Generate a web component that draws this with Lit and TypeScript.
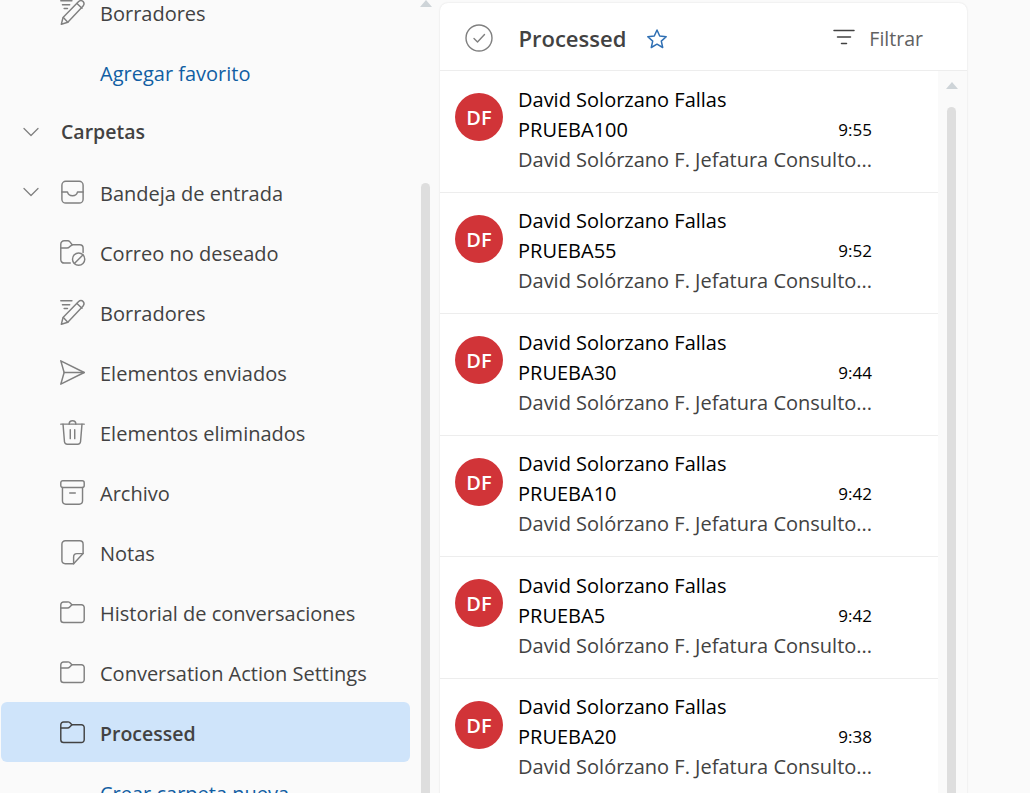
import { LitElement, html, css, svg } from "lit";
import { customElement } from "lit/decorators.js";

const ic = (inner: unknown) => html`<svg class="ic" width="29" height="29" viewBox="0 0 26 26" fill="none" stroke="currentColor" stroke-width="1.300" stroke-linecap="round" stroke-linejoin="round">${inner}</svg>`;

const icons: Record<string, unknown> = {
  draft: ic(svg`<path d="M2.500 2.500h10M4 6h6.500M5.500 9.500h3"/><path d="M3 23.500l1.500-6L18.500 3.200c1.200-1.200 3-1.200 4 0s1 2.800 0 3.900L8.800 21.800z"/><path d="M17 5l4.500 4.200M4.800 17.500l4 4.300"/>`),
  inbox: ic(svg`<rect x="3.500" y="3" width="19" height="19.500" rx="3.500"/><path d="M3.500 12.500h5c.5 2.400 2.200 3.500 4.500 3.500s4-1.100 4.500-3.500h5"/>`),
  junk: ic(svg`<path d="M11 22.500H5.500A3 3 0 0 1 2.500 19.500V5.500a3 3 0 0 1 3-3h3.300c.8 0 1.400.4 1.900 1l2 2.500h6.800a3 3 0 0 1 3 3v4"/><path d="M2.500 9h5.500c1 0 1.800-.5 2.500-1.200L13 6"/><circle cx="18.500" cy="19" r="5.500"/><path d="M14.700 22.800l7.600-7.600"/>`),
  send: ic(svg`<path d="M2.500 2.500l21 10.500-21 10.500 3-10.500z"/><path d="M5.500 13h18"/>`),
  trash: ic(svg`<path d="M2.500 5.500h21"/><path d="M10 5.500c0-1.700 1.300-3 3-3s3 1.300 3 3"/><path d="M4.500 5.500l1.300 15.800a2.500 2.500 0 0 0 2.500 2.200h9.400a2.500 2.500 0 0 0 2.500-2.200l1.300-15.800"/><path d="M11 10.500v8M15 10.500v8"/>`),
  archive: ic(svg`<rect x="2.500" y="2.500" width="21" height="6" rx="1.800"/><path d="M4 8.500v12a3 3 0 0 0 3 3h12a3 3 0 0 0 3-3v-12"/><path d="M10.500 13.500h5"/>`),
  note: ic(svg`<path d="M14 23H6.500a3 3 0 0 1-3-3V5.500a3 3 0 0 1 3-3h13a3 3 0 0 1 3 3V14z"/><path d="M14 23v-6a3 3 0 0 1 3-3h5.500"/>`),
  folder: ic(svg`<path d="M2.500 7V19.500a2.500 2.500 0 0 0 2.500 2.500h16a2.500 2.500 0 0 0 2.500-2.500V8.500A2.500 2.500 0 0 0 21 6h-8.500l-2-2A2.500 2.500 0 0 0 8.700 3.500H5a2.500 2.500 0 0 0-2.500 2.500z"/><path d="M2.500 9H8.500c.8 0 1.500-.3 2-.9L12.500 6"/>`),
};

const chevron = html`<svg class="chev" width="16" height="10" viewBox="0 0 16 10" fill="none" stroke="currentColor" stroke-width="1.300" stroke-linecap="round" stroke-linejoin="round"><path d="M1 1.500l7 7 7-7"/></svg>`;

const tree: [string, string][] = [
  ["junk", "Correo no deseado"],
  ["draft", "Borradores"],
  ["send", "Elementos enviados"],
  ["trash", "Elementos eliminados"],
  ["archive", "Archivo"],
  ["note", "Notas"],
  ["folder", "Historial de conversaciones"],
  ["folder", "Conversation Action Settings"],
];
const mails: [string, string][] = [
  ["PRUEBA100", "9:55"],
  ["PRUEBA55", "9:52"],
  ["PRUEBA30", "9:44"],
  ["PRUEBA10", "9:42"],
  ["PRUEBA5", "9:42"],
  ["PRUEBA20", "9:38"],
];

@customElement("app-root")
export class AppRoot extends LitElement {
  static styles = css`
    :host {
      display: flex;
      width: 1030px;
      height: 793px;
      overflow: hidden;
      background: #fafafa;
      font-family: "Open Sans", "Noto Sans", sans-serif;
      font-size: 20px;
      color: #424242;
    }
    .side { width: 409px; margin-left: 1px; flex: none; height: 793px; overflow: hidden; }
    .nav { margin-top: -18px; display: flex; flex-direction: column; }
    .row { height: 60px; flex: none; display: flex; align-items: center; padding-left: 56.500px; gap: 13.500px; border-radius: 6px; white-space: nowrap; }
    .row span { padding-top: 2px; }
    .row.plain { padding-left: 99px; }
    .row.parent { padding-left: 22px; }
    .row.parent .chev { margin-right: 5px; color: #808080; }
    .row.head { font-weight: 600; font-size: 19.500px; padding-left: 22px; }
    .row.head span { padding-top: 0; padding-bottom: 2px; }
    .row.head .chev { margin-right: 8.500px; color: #808080; }
    .link { color: #115ea3; }
    .sel { background: #cfe4fa; font-weight: 600; font-size: 19.500px; }
    .ic { flex: none; color: #808080; }
    .sel .ic { color: #424242; }
    .sb { flex: none; display: flex; flex-direction: column; align-items: center; }
    .sb.left { width: 29px; padding-left: 1px; }
    .arrow { width: 0; height: 0; border-left: 6px solid transparent; border-right: 6px solid transparent; border-bottom: 7px solid #ced4d8; }
    .thumb { width: 9px; border-radius: 5px 5px 0 0; background: #dedede; flex: 1; }
    .sb.left .thumb { margin-top: 176px; }
    .main { width: 527px; flex: none; height: 800px; margin-top: 3px; background: #fff; border-radius: 8px 8px 0 0; box-shadow: 0 0 2px rgba(0,0,0,.12); display: flex; flex-direction: column; }
    .hdr { height: 65px; flex: none; display: flex; align-items: center; border-bottom: 1px solid #ededed; padding: 2px 0 0 24px; box-sizing: content-box; }
    .check { color: #808080; }
    .title { font-size: 22px; font-weight: 600; margin-left: 24.500px; }
    .star { margin-left: 19.500px; margin-top: 3px; }
    .filter { margin-left: auto; display: flex; align-items: center; gap: 13px; padding-right: 44px; color: #616161; font-size: 19.500px; }
    .filter span { padding-top: 2px; }
    .filter svg { margin-top: -1px; }
    .body { flex: 1; display: flex; min-height: 0; }
    .list { width: 498px; flex: none; }
    .mail { height: 121.500px; box-sizing: border-box; border-bottom: 1px solid #ededed; display: flex; align-items: flex-start; padding: 22px 66px 0 15px; gap: 15px; }
    .av { width: 48px; height: 48px; border-radius: 50%; background: #d13438; color: #fff; font-weight: 600; font-size: 20px; display: flex; align-items: center; justify-content: center; flex: none; padding-top: 1px; box-sizing: border-box; }
    .txt { flex: 1; min-width: 0; display: flex; flex-direction: column; margin-top: -8.500px; }
    .ln { height: 30px; line-height: 30px; display: flex; justify-content: space-between; white-space: nowrap; color: #000; }
    .tm { font-size: 17px; }
    .pv { color: #424242; }
    .body .sb { background: #fafafa; width: 27px; padding: 11px 2px 0 0; }
    .body .thumb { margin-top: 18px; }
  `;

  render() {
    return html`
      <div class="side">
        <div class="nav">
          <div class="row">${icons.draft}<span>Borradores</span></div>
          <div class="row plain link"><span>Agregar favorito</span></div>
          <div class="row head">${chevron}<span>Carpetas</span></div>
          <div class="row parent">${chevron}${icons.inbox}<span>Bandeja de entrada</span></div>
          ${tree.map(([i, t]) => html`<div class="row">${icons[i]}<span>${t}</span></div>`)}
          <div class="row sel">${icons.folder}<span>Processed</span></div>
          <div class="row plain link"><span>Crear carpeta nueva</span></div>
        </div>
      </div>
      <div class="sb left"><div class="arrow"></div><div class="thumb"></div></div>
      <div class="main">
        <div class="hdr">
          <svg class="check" width="30" height="30" viewBox="0 0 30 30" fill="none" stroke="currentColor" stroke-width="1.400" stroke-linecap="round" stroke-linejoin="round"><circle cx="15" cy="15" r="13"/><path d="M10 15.500l3.500 3.500 7-7.500"/></svg>
          <span class="title">Processed</span>
          <svg class="star" width="22" height="22" viewBox="0 0 22 22" fill="none" stroke="#2f6fb3" stroke-width="1.500" stroke-linejoin="round"><path d="M11 2l2.700 6 6.500.700-4.900 4.400 1.400 6.400L11 16.200l-5.700 3.300 1.400-6.400L1.800 8.700 8.300 8z"/></svg>
          <div class="filter">
            <svg width="24" height="20" viewBox="0 0 24 20" fill="none" stroke="#424242" stroke-width="1.500" stroke-linecap="round"><path d="M2 3.500h20M5.500 10h13M9.500 16.500h5"/></svg>
            <span>Filtrar</span>
          </div>
        </div>
        <div class="body">
          <div class="list">
            ${mails.map(([s, t]) => html`
              <div class="mail">
                <div class="av">DF</div>
                <div class="txt">
                  <div class="ln"><span>David Solorzano Fallas</span></div>
                  <div class="ln"><span>${s}</span><span class="tm">${t}</span></div>
                  <div class="ln pv"><span>David Solórzano F. Jefatura Consulto...</span></div>
                </div>
              </div>`)}
          </div>
          <div class="sb"><div class="arrow"></div><div class="thumb"></div></div>
        </div>
      </div>
    `;
  }
}
